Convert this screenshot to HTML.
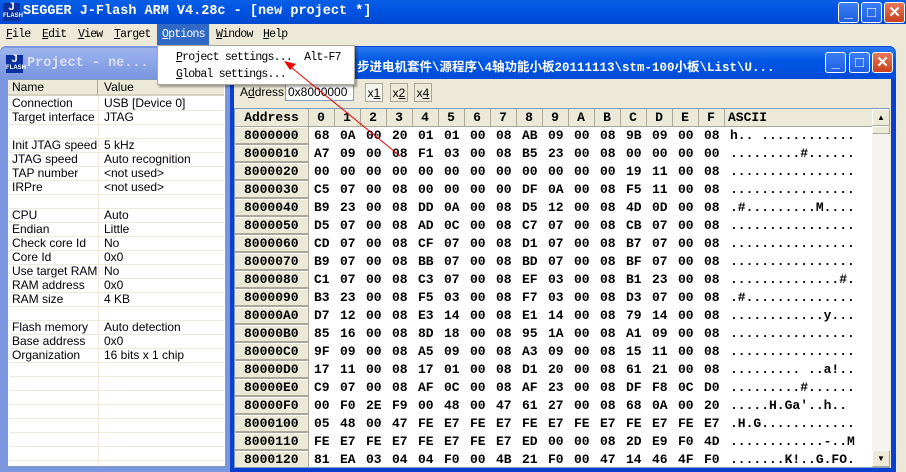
<!DOCTYPE html>
<html><head><meta charset="utf-8">
<style>
*{margin:0;padding:0;box-sizing:border-box}
html,body{width:906px;height:472px;overflow:hidden}
body{background:#ece9d8;position:relative;font-family:"Liberation Sans",sans-serif;font-size:12px}
.abs{position:absolute}
.tb{left:0;top:0;width:906px;height:24px;background:linear-gradient(#0a5fe6,#0054e3 40%,#0048d0);}
.tt{font-family:"Liberation Mono","Noto Sans CJK SC",monospace;font-weight:bold;color:#fff;font-size:13.5px;white-space:nowrap}
.btn{width:21px;height:21px;border:1px solid #fff;border-radius:3px;background:linear-gradient(#3c7ef5,#1f5fe0);color:#fff;font-weight:bold;text-align:center;line-height:19px;font-size:15px}
.btn.x{background:linear-gradient(#e8775a,#c9401c)}
.menu{left:0;top:24px;width:906px;height:21px;font-family:"Liberation Mono",monospace;font-size:11.5px;letter-spacing:-0.8px}
.menu span{position:absolute;top:4px}
.logo{width:17px;height:18px;background:#0a2fa0;color:#fff;font-weight:bold;font-size:11px;line-height:9px;text-align:center}
.logo b{display:block;font-size:6px;line-height:8px}
.hex{font-family:"Liberation Mono",monospace;font-weight:bold;font-size:13px;white-space:pre}
.rows{white-space:normal}
.row{height:18px;line-height:18px;white-space:nowrap}
.row i{font-style:normal;display:inline-block;width:26px}
.hd i{font-style:normal;display:inline-block;width:26px;text-align:center}
.prow{position:absolute;left:9px;width:215px;height:14px;border-bottom:1px solid #eeebdd;font-size:12px;line-height:13px}
.prow span{position:absolute;left:95px}
.prow i{font-style:normal;position:absolute;left:3px}
.dd{font-family:'Liberation Mono',monospace;font-size:11.5px;letter-spacing:-0.8px;white-space:pre}
</style></head><body>
<div class="abs tb"></div>
<div class="abs logo" style="left:3px;top:3px">J<b>FLASH</b></div>
<div class="abs tt" style="left:23px;top:4px">SEGGER J-Flash ARM V4.28c - [new project *]</div>
<div class="abs btn" style="left:838px;top:2px">_</div>
<div class="abs btn" style="left:861px;top:2px">□</div>
<div class="abs btn x" style="left:884px;top:2px">✕</div>

<div class="abs menu">
<span style="left:6px"><u>F</u>ile</span>
<span style="left:42px"><u>E</u>dit</span>
<span style="left:78px"><u>V</u>iew</span>
<span style="left:114px"><u>T</u>arget</span>
<div class="abs" style="left:157px;top:0;width:52px;height:21px;background:#316ac5"></div>
<span style="left:162px;color:#fff"><u>O</u>ptions</span>
<span style="left:216px"><u>W</u>indow</span>
<span style="left:263px"><u>H</u>elp</span>
</div>

<!-- left window -->
<div class="abs" style="left:0;top:46px;width:231px;height:426px;background:#7a96df;border-radius:6px 6px 0 0"></div>
<div class="abs" style="left:0;top:48px;width:231px;height:30px;background:linear-gradient(#9db4ee,#7a96df);border-radius:6px 6px 0 0"></div>
<div class="abs logo" style="left:6px;top:55px">J<b>FLASH</b></div>
<div class="abs tt" style="left:27px;top:56px;color:#d8e0f4">Project - ne...</div>
<div class="abs" style="left:7px;top:79px;width:219px;height:388px;background:#fff;border:1px solid #7f9db9"></div>
<div class="abs" style="left:8px;top:80px;width:90px;height:16px;background:#ece9d8;border-right:1px solid #aca899;border-bottom:2px solid #d6d2c2;padding-left:4px;line-height:15px">Name</div>
<div class="abs" style="left:98px;top:80px;width:126px;height:16px;background:#ece9d8;border-bottom:2px solid #d6d2c2;padding-left:6px;line-height:15px">Value</div>
<div class="abs" style="left:98px;top:96px;width:1px;height:370px;background:#eeebdd"></div>
<div class="prow" style="top:97px"><i>Connection</i><span>USB [Device 0]</span></div>
<div class="prow" style="top:111px"><i>Target interface</i><span>JTAG</span></div>
<div class="prow" style="top:125px"></div>
<div class="prow" style="top:139px"><i>Init JTAG speed</i><span>5 kHz</span></div>
<div class="prow" style="top:153px"><i>JTAG speed</i><span>Auto recognition</span></div>
<div class="prow" style="top:167px"><i>TAP number</i><span>&lt;not used&gt;</span></div>
<div class="prow" style="top:181px"><i>IRPre</i><span>&lt;not used&gt;</span></div>
<div class="prow" style="top:195px"></div>
<div class="prow" style="top:209px"><i>CPU</i><span>Auto</span></div>
<div class="prow" style="top:223px"><i>Endian</i><span>Little</span></div>
<div class="prow" style="top:237px"><i>Check core Id</i><span>No</span></div>
<div class="prow" style="top:251px"><i>Core Id</i><span>0x0</span></div>
<div class="prow" style="top:265px"><i>Use target RAM</i><span>No</span></div>
<div class="prow" style="top:279px"><i>RAM address</i><span>0x0</span></div>
<div class="prow" style="top:293px"><i>RAM size</i><span>4 KB</span></div>
<div class="prow" style="top:307px"></div>
<div class="prow" style="top:321px"><i>Flash memory</i><span>Auto detection</span></div>
<div class="prow" style="top:335px"><i>Base address</i><span>0x0</span></div>
<div class="prow" style="top:349px"><i>Organization</i><span>16 bits x 1 chip</span></div>
<div class="prow" style="top:363px"></div><div class="prow" style="top:377px"></div><div class="prow" style="top:391px"></div><div class="prow" style="top:405px"></div><div class="prow" style="top:419px"></div><div class="prow" style="top:433px"></div><div class="prow" style="top:447px"></div>

<!-- right window -->
<div class="abs" style="left:230px;top:46px;width:666px;height:426px;background:#0a3fd0;border-radius:7px 7px 0 0"></div>
<div class="abs" style="left:230px;top:47px;width:666px;height:32px;background:linear-gradient(#2a7af0,#0058e6 40%,#004ad8);border-radius:7px 7px 0 0"></div>
<div class="abs tt" style="left:357px;top:56px;font-size:12.5px">步进电机套件\源程序\4轴功能小板20111113\stm-100小板\List\U...</div>
<div class="abs btn" style="left:825px;top:52px">_</div>
<div class="abs btn" style="left:849px;top:52px">□</div>
<div class="abs btn x" style="left:872px;top:52px">✕</div>
<div class="abs" style="left:234px;top:79px;width:657px;height:389px;background:#ece9d8"></div>
<div class="abs" style="left:240px;top:85px">A<u>d</u>dress:</div>
<div class="abs" style="left:285px;top:83px;width:69px;height:18px;background:#fff;border:1px solid #7f9db9;padding-left:2px;line-height:16px">0x8000000</div>
<div class="abs" style="left:365px;top:83px;width:18px;height:19px;border:1px solid #aca899;background:#f5f4ee;text-align:center;line-height:18px">x<u>1</u></div>
<div class="abs" style="left:390px;top:83px;width:18px;height:19px;border:1px solid #aca899;text-align:center;line-height:18px">x<u>2</u></div>
<div class="abs" style="left:414px;top:83px;width:18px;height:19px;border:1px solid #aca899;text-align:center;line-height:18px">x<u>4</u></div>

<div class="abs" style="left:234px;top:108px;width:656px;height:360px;background:#fff;border:1px solid #7f9db9"></div>
<div class="abs" style="left:235px;top:109px;width:637px;height:18px;background:#ece9d8;border-bottom:1px solid #aca899"></div>
<div class="abs hex hd" style="left:235px;top:109px;line-height:18px"><i style="width:73px">Address</i><i>0</i><i>1</i><i>2</i><i>3</i><i>4</i><i>5</i><i>6</i><i>7</i><i>8</i><i>9</i><i>A</i><i>B</i><i>C</i><i>D</i><i>E</i><i>F</i><i style="width:60px;text-align:left;padding-left:4px">ASCII</i></div>
<div class="abs" style="left:308px;top:109px;width:1px;height:18px;background:#aca899;box-shadow:26px 0 #aca899,52px 0 #aca899,78px 0 #aca899,104px 0 #aca899,130px 0 #aca899,156px 0 #aca899,182px 0 #aca899,208px 0 #aca899,234px 0 #aca899,260px 0 #aca899,286px 0 #aca899,312px 0 #aca899,338px 0 #aca899,364px 0 #aca899,390px 0 #aca899,416px 0 #aca899"></div>
<div class="abs" style="left:308px;top:127px;width:1px;height:340px;background:#aca899"></div>

<div class="abs" style="left:235px;top:127px;width:73px;height:340px;background:repeating-linear-gradient(#fff 0,#fff 1px,#ece9d8 1px,#ece9d8 16px,#aca899 16px,#aca899 18px)"></div>
<div class="abs hex" style="left:244px;top:127px;line-height:18px;height:340px;overflow:hidden">8000000
8000010
8000020
8000030
8000040
8000050
8000060
8000070
8000080
8000090
80000A0
80000B0
80000C0
80000D0
80000E0
80000F0
8000100
8000110
8000120</div>
<div class="abs hex rows" style="left:314px;top:127px;width:558px;height:340px;overflow:hidden"><div class="row"><i>68</i><i>0A</i><i>00</i><i>20</i><i>01</i><i>01</i><i>00</i><i>08</i><i>AB</i><i>09</i><i>00</i><i>08</i><i>9B</i><i>09</i><i>00</i><i>08</i>h.. ............</div><div class="row"><i>A7</i><i>09</i><i>00</i><i>08</i><i>F1</i><i>03</i><i>00</i><i>08</i><i>B5</i><i>23</i><i>00</i><i>08</i><i>00</i><i>00</i><i>00</i><i>00</i>.........#......</div><div class="row"><i>00</i><i>00</i><i>00</i><i>00</i><i>00</i><i>00</i><i>00</i><i>00</i><i>00</i><i>00</i><i>00</i><i>00</i><i>19</i><i>11</i><i>00</i><i>08</i>................</div><div class="row"><i>C5</i><i>07</i><i>00</i><i>08</i><i>00</i><i>00</i><i>00</i><i>00</i><i>DF</i><i>0A</i><i>00</i><i>08</i><i>F5</i><i>11</i><i>00</i><i>08</i>................</div><div class="row"><i>B9</i><i>23</i><i>00</i><i>08</i><i>DD</i><i>0A</i><i>00</i><i>08</i><i>D5</i><i>12</i><i>00</i><i>08</i><i>4D</i><i>0D</i><i>00</i><i>08</i>.#.........M....</div><div class="row"><i>D5</i><i>07</i><i>00</i><i>08</i><i>AD</i><i>0C</i><i>00</i><i>08</i><i>C7</i><i>07</i><i>00</i><i>08</i><i>CB</i><i>07</i><i>00</i><i>08</i>................</div><div class="row"><i>CD</i><i>07</i><i>00</i><i>08</i><i>CF</i><i>07</i><i>00</i><i>08</i><i>D1</i><i>07</i><i>00</i><i>08</i><i>B7</i><i>07</i><i>00</i><i>08</i>................</div><div class="row"><i>B9</i><i>07</i><i>00</i><i>08</i><i>BB</i><i>07</i><i>00</i><i>08</i><i>BD</i><i>07</i><i>00</i><i>08</i><i>BF</i><i>07</i><i>00</i><i>08</i>................</div><div class="row"><i>C1</i><i>07</i><i>00</i><i>08</i><i>C3</i><i>07</i><i>00</i><i>08</i><i>EF</i><i>03</i><i>00</i><i>08</i><i>B1</i><i>23</i><i>00</i><i>08</i>..............#.</div><div class="row"><i>B3</i><i>23</i><i>00</i><i>08</i><i>F5</i><i>03</i><i>00</i><i>08</i><i>F7</i><i>03</i><i>00</i><i>08</i><i>D3</i><i>07</i><i>00</i><i>08</i>.#..............</div><div class="row"><i>D7</i><i>12</i><i>00</i><i>08</i><i>E3</i><i>14</i><i>00</i><i>08</i><i>E1</i><i>14</i><i>00</i><i>08</i><i>79</i><i>14</i><i>00</i><i>08</i>............y...</div><div class="row"><i>85</i><i>16</i><i>00</i><i>08</i><i>8D</i><i>18</i><i>00</i><i>08</i><i>95</i><i>1A</i><i>00</i><i>08</i><i>A1</i><i>09</i><i>00</i><i>08</i>................</div><div class="row"><i>9F</i><i>09</i><i>00</i><i>08</i><i>A5</i><i>09</i><i>00</i><i>08</i><i>A3</i><i>09</i><i>00</i><i>08</i><i>15</i><i>11</i><i>00</i><i>08</i>................</div><div class="row"><i>17</i><i>11</i><i>00</i><i>08</i><i>17</i><i>01</i><i>00</i><i>08</i><i>D1</i><i>20</i><i>00</i><i>08</i><i>61</i><i>21</i><i>00</i><i>08</i>......... ..a!..</div><div class="row"><i>C9</i><i>07</i><i>00</i><i>08</i><i>AF</i><i>0C</i><i>00</i><i>08</i><i>AF</i><i>23</i><i>00</i><i>08</i><i>DF</i><i>F8</i><i>0C</i><i>D0</i>.........#......</div><div class="row"><i>00</i><i>F0</i><i>2E</i><i>F9</i><i>00</i><i>48</i><i>00</i><i>47</i><i>61</i><i>27</i><i>00</i><i>08</i><i>68</i><i>0A</i><i>00</i><i>20</i>.....H.Ga'..h..</div><div class="row"><i>05</i><i>48</i><i>00</i><i>47</i><i>FE</i><i>E7</i><i>FE</i><i>E7</i><i>FE</i><i>E7</i><i>FE</i><i>E7</i><i>FE</i><i>E7</i><i>FE</i><i>E7</i>.H.G............</div><div class="row"><i>FE</i><i>E7</i><i>FE</i><i>E7</i><i>FE</i><i>E7</i><i>FE</i><i>E7</i><i>ED</i><i>00</i><i>00</i><i>08</i><i>2D</i><i>E9</i><i>F0</i><i>4D</i>............-..M</div><div class="row"><i>81</i><i>EA</i><i>03</i><i>04</i><i>04</i><i>F0</i><i>00</i><i>4B</i><i>21</i><i>F0</i><i>00</i><i>47</i><i>14</i><i>46</i><i>4F</i><i>F0</i>.......K!..G.FO.</div></div>
<!-- scrollbar -->
<div class="abs" style="left:872px;top:109px;width:18px;height:358px;background:#f4f3ee"></div>
<div class="abs" style="left:872px;top:109px;width:18px;height:17px;background:#ece9d8;border:1px solid #fff;border-right-color:#aca899;border-bottom-color:#aca899;text-align:center;font-size:8px;line-height:15px">▲</div>
<div class="abs" style="left:872px;top:126px;width:18px;height:8px;background:#ece9d8;border:1px solid #fff;border-right-color:#aca899;border-bottom-color:#aca899"></div>
<div class="abs" style="left:872px;top:450px;width:18px;height:17px;background:#ece9d8;border:1px solid #fff;border-right-color:#aca899;border-bottom-color:#aca899;text-align:center;font-size:8px;line-height:15px">▼</div>

<!-- dropdown -->
<div class="abs dd" style="left:157px;top:45px;width:198px;height:40px;background:#fff;border:1px solid #aca899;box-shadow:2px 2px 2px rgba(0,0,0,.35)">
<div class="abs" style="left:18px;top:5px"><u>P</u>roject settings...  Alt-F7</div>
<div class="abs" style="left:18px;top:22px"><u>G</u>lobal settings...</div>
</div>
<svg class="abs" style="left:0;top:0" width="906" height="472"><line x1="400" y1="156" x2="287" y2="64" stroke="#e00" stroke-width="1"/><polygon points="284,61 296,64 290,70" fill="#e00"/></svg>
</body></html>
